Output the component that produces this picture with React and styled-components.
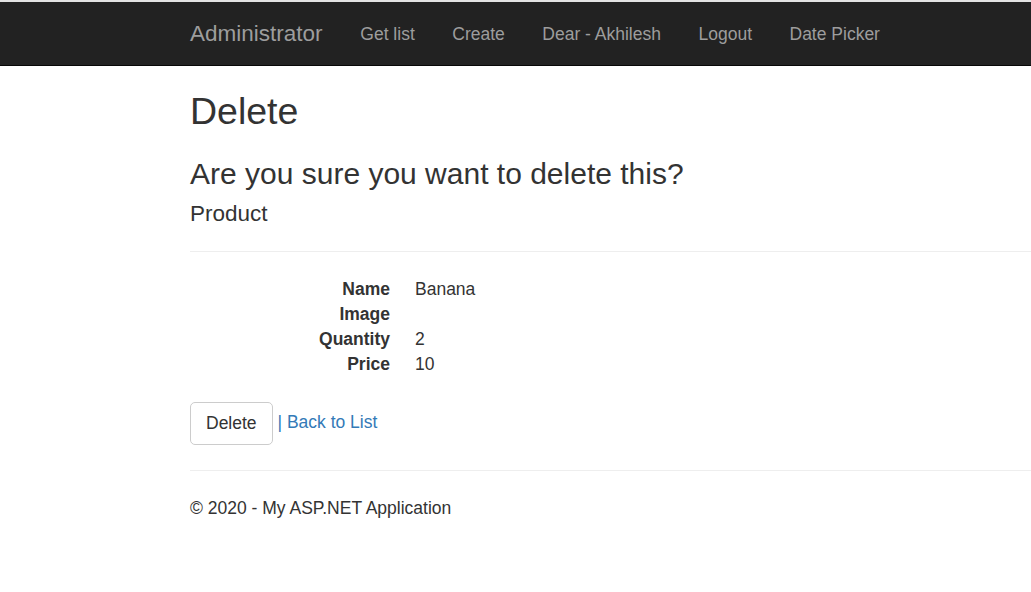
import React from "react"
import styled, { createGlobalStyle } from "styled-components"

const GlobalStyle = createGlobalStyle`
  html, body {
    margin: 0;
    padding: 0;
    overflow: hidden;
    background: #fff;
  }
  body {
    font-family: "Liberation Sans", Arial, Helvetica, sans-serif;
    font-size: 17.5px;
    line-height: 25px;
    color: #333;
  }
  * {
    box-sizing: border-box;
  }
`

const navItems = ["Get list", "Create", "Dear - Akhilesh", "Logout", "Date Picker"]

const details = [
  { label: "Name", value: "Banana" },
  { label: "Image", value: "" },
  { label: "Quantity", value: "2" },
  { label: "Price", value: "10" },
]

const App = () => (
  <>
    <GlobalStyle />
    <TopStripe />
    <Navbar>
      <NavContainer>
        <Brand href="#">Administrator</Brand>
        <Nav>
          {navItems.map(item => (
            <li key={item}>
              <NavLink href="#">{item}</NavLink>
            </li>
          ))}
        </Nav>
      </NavContainer>
    </Navbar>
    <BodyContent>
      <Title>Delete</Title>
      <Question>Are you sure you want to delete this?</Question>
      <div>
        <SubTitle>Product</SubTitle>
        <Rule $top={24} />
        <DetailList>
          {details.map(item => (
            <React.Fragment key={item.label}>
              <dt>{item.label}</dt>
              <dd>{item.value}</dd>
            </React.Fragment>
          ))}
        </DetailList>
        <form onSubmit={e => e.preventDefault()}>
          <Actions>
            <Button type="submit">Delete</Button> |{" "}
            <Link href="#">Back to List</Link>
          </Actions>
        </form>
      </div>
      <Rule />
      <Footer>
        <p>&copy; 2020 - My ASP.NET Application</p>
      </Footer>
    </BodyContent>
  </>
)

const TopStripe = styled.div`
  height: 2px;
  background: #e3e3e3;
`

const Navbar = styled.nav`
  height: 64px;
  background: #222;
  border-bottom: 1px solid #080808;
`

const NavContainer = styled.div`
  display: flex;
  margin-left: 171px;
  padding: 0 19px;
`

const Brand = styled.a`
  height: 63px;
  padding: 19px 19px;
  margin-left: -19px;
  font-size: 22.5px;
  line-height: 25px;
  color: #9d9d9d;
  text-decoration: none;
`

const Nav = styled.ul`
  display: flex;
  list-style: none;
  margin: 0;
  padding: 0;
`

const NavLink = styled.a`
  display: block;
  padding: 20px 18.75px 18px;
  line-height: 25px;
  color: #9d9d9d;
  text-decoration: none;
`

const BodyContent = styled.main`
  margin-left: 190px;
`

const Title = styled.h2`
  margin: 24.5px 0 12.5px;
  font-size: 37.5px;
  font-weight: 500;
  line-height: 1.1;
`

const Question = styled.h3`
  margin: 25px 0 12.5px;
  font-size: 30px;
  font-weight: 500;
  line-height: 1.1;
`

const SubTitle = styled.h4`
  margin: 12.5px 0 12.5px;
  font-size: 22.5px;
  font-weight: 500;
  line-height: 1.1;
`

const Rule = styled.hr`
  margin: ${p => p.$top ?? 25}px 0 25px;
  border: 0;
  border-top: 1px solid #eee;
`

const DetailList = styled.dl`
  display: grid;
  grid-template-columns: 200px 1fr;
  column-gap: 25px;
  margin: 0 0 25px;

  dt {
    font-weight: 700;
    text-align: right;
    min-height: 25px;
  }
  dd {
    margin: 0;
    min-height: 25px;
  }
`

const Actions = styled.div`
  color: #337ab7;
`

const Button = styled.button`
  height: 43px;
  padding: 7.5px 15px;
  font-family: inherit;
  font-size: 17.5px;
  line-height: 25px;
  color: #333;
  background: #fff;
  border: 1px solid #ccc;
  border-radius: 5px;
  vertical-align: middle;
  cursor: pointer;
`

const Link = styled.a`
  color: #337ab7;
  text-decoration: none;
`

const Footer = styled.footer`
  p {
    margin: 0 0 12.5px;
  }
`

export default App
